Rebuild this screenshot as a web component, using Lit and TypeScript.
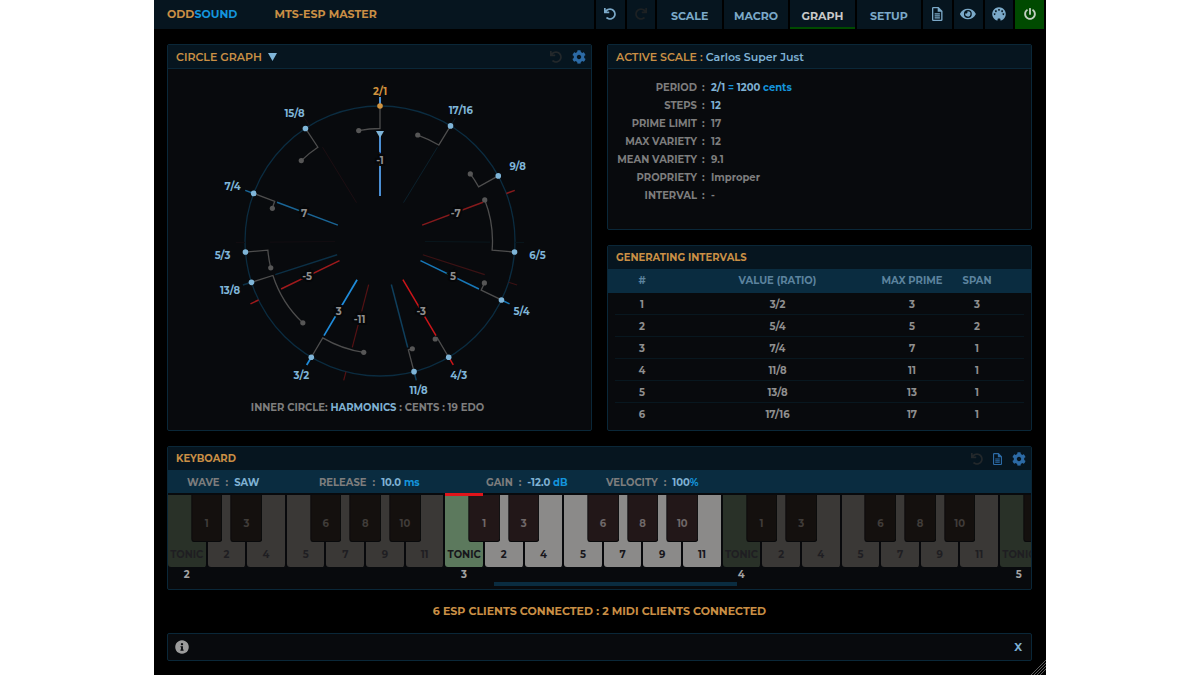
import { LitElement, html, css, svg, nothing } from "lit";
import { customElement, property, state } from "lit/decorators.js";
import { classMap } from "lit/directives/class-map.js";
import { styleMap } from "lit/directives/style-map.js";

const icons = {
  undo: {
    box: "0 0 512 512",
    d: "M212.333 224.333H12c-6.627 0-12-5.373-12-12V12C0 5.373 5.373 0 12 0h48c6.627 0 12 5.373 12 12v78.112C117.773 39.279 184.26 7.47 258.175 8.007c136.906.994 246.448 111.623 246.157 248.532C504.041 393.258 393.12 504 256.333 504c-64.089 0-122.496-24.313-166.51-64.215-5.099-4.622-5.334-12.554-.467-17.42l33.967-33.967c4.474-4.474 11.662-4.717 16.401-.525C170.76 415.336 211.58 432 256.333 432c97.268 0 176-78.716 176-176 0-97.267-78.716-176-176-176-58.496 0-110.28 28.476-142.274 72.333h98.274c6.627 0 12 5.373 12 12v48c0 6.627-5.373 12-12 12z",
  },
  cog: {
    box: "0 0 512 512",
    d: "M487.4 315.7l-42.6-24.6c4.3-23.2 4.3-47 0-70.2l42.6-24.6c4.9-2.8 7.1-8.6 5.5-14-11.1-35.6-30-67.8-54.7-94.6-3.8-4.1-10-5.1-14.8-2.3L380.8 110c-17.9-15.4-38.5-27.3-60.8-35.1V25.8c0-5.6-3.9-10.5-9.4-11.7-36.7-8.2-74.3-7.8-109.2 0-5.5 1.2-9.4 6.1-9.4 11.7V75c-22.2 7.9-42.8 19.8-60.8 35.1L88.7 85.5c-4.9-2.8-11-1.9-14.8 2.3-24.7 26.7-43.6 58.9-54.7 94.6-1.7 5.4.6 11.2 5.5 14L67.3 221c-4.3 23.2-4.3 47 0 70.2l-42.6 24.6c-4.9 2.8-7.1 8.6-5.5 14 11.1 35.6 30 67.8 54.7 94.6 3.8 4.1 10 5.1 14.8 2.3l42.6-24.6c17.9 15.4 38.5 27.3 60.8 35.1v49.2c0 5.6 3.9 10.5 9.4 11.7 36.7 8.2 74.3 7.8 109.2 0 5.5-1.2 9.4-6.1 9.4-11.7v-49.2c22.2-7.9 42.8-19.8 60.8-35.1l42.6 24.6c4.9 2.8 11 1.9 14.8-2.3 24.7-26.7 43.6-58.9 54.7-94.6 1.5-5.5-.7-11.3-5.6-14.1zM256 336c-44.1 0-80-35.9-80-80s35.9-80 80-80 80 35.9 80 80-35.9 80-80 80z",
  },
  eye: {
    box: "0 0 576 512",
    d: "M572.52 241.4C518.29 135.59 410.93 64 288 64S57.68 135.64 3.48 241.41a32.35 32.35 0 0 0 0 29.19C57.71 376.41 165.07 448 288 448s230.32-71.64 284.52-177.41a32.35 32.35 0 0 0 0-29.19zM288 400a144 144 0 1 1 144-144 143.93 143.93 0 0 1-144 144zm0-240a95.31 95.31 0 0 0-25.31 3.79 47.85 47.85 0 0 1-66.9 66.9A95.78 95.78 0 1 0 288 160z",
  },
  power: {
    box: "0 0 512 512",
    d: "M400 54.1c63 45 104 118.6 104 201.9 0 136.8-110.8 247.7-247.5 248C120 504.3 8.2 393 8 256.4 7.9 173.1 48.9 99.3 111.8 54.2c11.7-8.3 28-4.8 35 7.7L162.6 90c5.9 10.5 3.1 23.8-6.6 31-41.5 30.8-68 79.6-68 134.9-.1 92.3 74.5 168.1 168 168.1 91.6 0 168.6-74.2 168-169.1-.3-51.8-24.7-101.8-68.1-134-9.7-7.2-12.4-20.5-6.5-30.9l15.8-28.1c7-12.4 23.2-16.1 34.8-7.8zM296 264V24c0-13.3-10.7-24-24-24h-32c-13.3 0-24 10.7-24 24v240c0 13.3 10.7 24 24 24h32c13.3 0 24-10.7 24-24z",
  },
  doc: {
    box: "0 0 384 512",
    d: "M48 0H240L384 144V464Q384 512 336 512H48Q0 512 0 464V48Q0 0 48 0ZM48 48V464H336V176H208V48ZM96 232H288V276H96ZM96 304H288V348H96ZM96 376H288V416H96Z",
  },
  midi: {
    box: "0 0 512 512",
    d: "M205 498A248 248 0 1 1 307 498V440Q307 416 283 416H229Q205 416 205 440ZM96 228a32 32 0 1 0 .1 0ZM142 122a32 32 0 1 0 .1 0ZM256 74a32 32 0 1 0 .1 0ZM370 122a32 32 0 1 0 .1 0ZM416 228a32 32 0 1 0 .1 0Z",
  },
  info: {
    box: "0 0 512 512",
    d: "M256 8a248 248 0 1 0 .1 0ZM256 110a42 42 0 1 1-.1 0ZM200 224H290V350H314V392H198V350H222V266H200Z",
  },
};

@customElement("ui-icon")
class UiIcon extends LitElement {
  @property() name: keyof typeof icons = "undo";

  static styles = css`
    :host { display: flex; }
    svg { display: block; height: 12px; width: auto; overflow: visible; }
    :host([large]) svg { height: 14px; }
  `;

  render() {
    const { box, d } = icons[this.name];
    return html`<svg viewBox=${box} fill="currentColor" fill-rule="evenodd" aria-hidden="true"><path d=${d}></path></svg>`;
  }
}

const RIM = 135;
const BEND = 112.5;

const cents = (num: number, den: number) => 1200 * Math.log2(num / den);
const toAngle = (c: number) => (c / 1200) * 360;
const at = (angle: number, r: number) => {
  const a = (angle * Math.PI) / 180;
  return { x: r * Math.sin(a), y: -r * Math.cos(a) };
};

// ratio of every scale note, and the angle of the reference pitch it is tied to
const notes = [
  { num: 2, den: 1, ref: 349.1 },
  { num: 17, den: 16, ref: 19.6 },
  { num: 9, den: 8, ref: 53.4 },
  { num: 6, den: 5, ref: 68.6 },
  { num: 5, den: 4, ref: 111.9 },
  { num: 4, den: 3, ref: 150.6 },
  { num: 11, den: 8, ref: 163.3 },
  { num: 3, den: 2, ref: 188.3 },
  { num: 13, den: 8, ref: 223.3 },
  { num: 5, den: 3, ref: 256.2 },
  { num: 7, den: 4, ref: 286.9 },
  { num: 15, den: 8, ref: 315.6 },
];

const spokes = [
  { angle: 0, color: "#4b8fd4", label: "-1", width: 2 },
  { angle: 31.5, color: "#0b202b", label: "", width: 1 },
  { angle: 69.4, color: "#861a1c", label: "-7", width: 1.5 },
  { angle: 90.6, color: "#08161c", label: "", width: 1 },
  { angle: 107.8, color: "#3c1214", label: "", width: 1.2 },
  { angle: 115.9, color: "#1878b8", label: "5", width: 1.5 },
  { angle: 149.4, color: "#cc1519", label: "-3", width: 1.5 },
  { angle: 165.4, color: "#0f3f5c", label: "", width: 1.5 },
  { angle: 194.6, color: "#551214", label: "-11", width: 1.2 },
  { angle: 210.6, color: "#1f8cdb", label: "3", width: 1.7 },
  { angle: 244.1, color: "#a01a1c", label: "-5", width: 1.5 },
  { angle: 252.2, color: "#0c3046", label: "", width: 1.5 },
  { angle: 269.4, color: "#120d11", label: "", width: 1 },
  { angle: 290.6, color: "#1a6595", label: "7", width: 1.5 },
  { angle: 328.5, color: "#1c0e12", label: "", width: 1 },
];

@customElement("circle-graph")
class CircleGraph extends LitElement {
  static styles = css`
    :host { display: block; }
    svg { display: block; width: 100%; height: auto; font-family: Montserrat, Inter, sans-serif; font-weight: 700; }
    .rim { fill: none; stroke: #0b2c40; stroke-width: 1.3; }
    .tie { fill: none; stroke: #4d4d4d; stroke-width: 1.3; }
    .ref { fill: #565656; }
    .note { fill: #7fb5d8; }
    .ratio { fill: #7fb5d8; font-size: 10px; text-anchor: middle; }
    .root { fill: #d0923e; }
    .harmonic { fill: #8f8f8f; stroke: #050608; stroke-width: 4; paint-order: stroke; font-size: 10px; text-anchor: middle; }
  `;

  private spoke(s: (typeof spokes)[number]) {
    const a = at(s.angle, 45);
    const b = at(s.angle, 110);
    const c = at(s.angle, RIM);
    const d = at(s.angle, 144);
    const t = at(s.angle, 81);
    return svg`
      <line x1=${a.x} y1=${a.y} x2=${b.x} y2=${b.y} stroke=${s.color} stroke-width=${s.width}></line>
      <line x1=${c.x} y1=${c.y} x2=${d.x} y2=${d.y} stroke=${s.color} stroke-width=${s.width}></line>
      ${s.label ? svg`<text class="harmonic" x=${t.x} y=${t.y + 4}>${s.label}</text>` : nothing}`;
  }

  private note(n: (typeof notes)[number]) {
    const root = n.num === 2;
    const angle = root ? 360 : toAngle(cents(n.num, n.den));
    const outer = at(angle, RIM);
    const bend = at(angle, BEND);
    const ref = at(n.ref, BEND);
    const label = at(angle, 151 + 7 * Math.abs(Math.sin((angle * Math.PI) / 180)));
    const sweep = n.ref > angle ? 1 : 0;
    return svg`
      <path class="tie" d="M${outer.x} ${outer.y}L${bend.x} ${bend.y}A${BEND} ${BEND} 0 0 ${sweep} ${ref.x} ${ref.y}"></path>
      <circle class="ref" cx=${ref.x} cy=${ref.y} r="2.6"></circle>
      <circle class=${root ? "root" : "note"} cx=${outer.x} cy=${outer.y} r="2.8"></circle>
      <text class=${root ? "ratio root" : "ratio"} x=${label.x} y=${label.y + 5}>${n.num}/${n.den}</text>`;
  }

  render() {
    return html`<svg viewBox="-212 -172 423 329" role="img" aria-label="Circle graph of scale notes">
      <circle class="rim" r=${RIM}></circle>
      ${spokes.map((s) => this.spoke(s))}
      ${notes.map((n) => this.note(n))}
      <path class="note" d="M-4 -110H4L0 -103Z"></path>
    </svg>`;
  }
}

const whiteKeys = ["TONIC", "2", "4", "5", "7", "9", "11"];
const blackKeys = [
  { label: "1", after: 1 },
  { label: "3", after: 2 },
  { label: "6", after: 4 },
  { label: "8", after: 5 },
  { label: "10", after: 6 },
];

@customElement("key-octave")
class KeyOctave extends LitElement {
  @property({ type: Number }) number = 0;
  @property({ type: Boolean, reflect: true }) active = false;
  // an octave that has only begun shows its tonic and the edge of the next key
  @property({ type: Boolean }) partial = false;

  static styles = css`
    :host { display: block; flex: 0 0 32.14%; color: #1f1e22; --white: #3a3836; --tonic: #293128; --black: #14100e; --black-text: #403c39; }
    :host([active]) { color: #17161b; --white: #8b8a89; --tonic: #5c795d; --black: #221718; --black-text: #6f6868; }
    button { font: inherit; margin: 0; padding: 0; cursor: pointer; }
    .keys { position: relative; display: grid; grid-template-columns: repeat(7, 1fr); height: 72px; }
    .white { display: flex; align-items: flex-end; justify-content: center; border: 0 solid #08090c; border-right-width: 2px; border-radius: 0 0 3px 3px; background: var(--white); color: inherit; line-height: 15px; padding-bottom: 5px; white-space: nowrap; }
    .tonic { background: var(--tonic); }
    .black { position: absolute; top: 0; width: 11.4%; height: 47px; transform: translateX(-50%); border: 1px solid #08090b; border-top: 0; border-radius: 0 0 3px 3px; background: var(--black); color: var(--black-text); padding-top: 12px; }
    .held { position: absolute; top: -2px; left: 0; width: 13.6%; height: 3px; background: #e0141a; }
    .number { display: block; width: 13.4%; text-align: center; line-height: 15px; color: #a3a3a3; }
  `;

  render() {
    const whites = this.partial ? whiteKeys.slice(0, 1) : whiteKeys;
    const blacks = this.partial ? [{ label: "", after: 1 }] : blackKeys;
    return html`
      <div class="keys">
        ${whites.map((k) => html`<button class=${classMap({ white: true, tonic: k === "TONIC" })}>${k}</button>`)}
        ${blacks.map((k) => html`<button class="black" style=${styleMap({ left: `${(k.after / 7) * 100 - 0.3}%` })}>${k.label}</button>`)}
        ${this.active ? html`<span class="held"></span>` : nothing}
      </div>
      <span class="number">${this.number}</span>`;
  }
}

@customElement("app-root")
class AppRoot extends LitElement {
  @state() private tab = "GRAPH";

  private facts = [
    ["STEPS", "12", true],
    ["PRIME LIMIT", "17", false],
    ["MAX VARIETY", "12", false],
    ["MEAN VARIETY", "9.1", false],
    ["PROPRIETY", "Improper", false],
    ["INTERVAL", "-", false],
  ] as const;

  private intervals = [
    ["3/2", 3, 3],
    ["5/4", 5, 2],
    ["7/4", 7, 1],
    ["11/8", 11, 1],
    ["13/8", 13, 1],
    ["17/16", 17, 1],
  ] as const;

  static styles = css`
    :host { display: block; background: #fff; color: #7d7d7d; font: 700 10px/18px Montserrat, Inter, sans-serif; }
    * { box-sizing: border-box; }
    button, select { font: inherit; color: inherit; background: none; border: 0; margin: 0; padding: 0; cursor: pointer; }
    h1, h2, dl, dd, p { margin: 0; font: inherit; }
    .app { position: relative; max-width: 892px; min-height: 100vh; margin: 0 auto; background: #000; }
    .top { display: flex; height: 29px; font-size: 11px; }
    .brand { flex: 1; display: flex; align-items: center; gap: 37px; padding: 0 0 1px 13px; background: #06151f; color: #c98f45; }
    .accent { color: #1494dc; }
    .value { color: #7fb1d3; }
    .nav { display: grid; grid-template-columns: 29fr 29fr repeat(4, 65fr) repeat(4, 29fr); gap: 2px; width: 452px; padding: 0 2px 0 2px; }
    .nav button { display: flex; align-items: center; justify-content: center; background: #06151f; color: #7ba9c8; border-bottom: 2px solid #06151f; padding-top: 4px; }
    .nav .tool { padding-top: 1px; }
    .nav .off { color: #1d2123; }
    .nav .current { color: #c9c9c9; border-bottom-color: #004a00; }
    .nav .power { background: #004a00; border-color: #004a00; color: #c0cfc0; }
    .flip { transform: scaleX(-1); }
    .main { display: flex; flex-direction: column; gap: 15px; padding: 15px 14px 0 13px; }
    .columns { display: grid; grid-template-columns: 1fr 1fr; gap: 15px; }
    .side { display: grid; grid-template-rows: 1fr 1fr; gap: 15px; }
    .panel { border: 1px solid #0a2738; border-radius: 2px; background: #080a0d; overflow: hidden; }
    .head { display: flex; align-items: center; justify-content: space-between; height: 23px; padding: 0 5px 0 8px; background: #06151f; color: #c98f45; }
    .ruled { height: 24px; border-bottom: 1px solid #0a2738; font-size: 11px; font-weight: 600; }
    .picker { display: flex; align-items: center; gap: 6px; }
    .picker select { appearance: none; text-transform: inherit; }
    .picker svg { width: 9px; height: 8px; fill: #7fb5d8; }
    .tools { display: flex; align-items: center; gap: 10px; color: #2c6aa5; }
    .tools button { display: flex; }
    .tools .off { color: #23282b; }
    .caption { text-align: center; padding: 1px 24px 13px 0; }
    .facts { display: grid; grid-template-columns: 89px 1fr; padding: 10px 0 23px; }
    .facts dt { text-align: right; white-space: nowrap; }
    .facts dd { display: flex; }
    .facts dd::before { content: ":"; width: 9px; padding-left: 5px; }
    table { width: 100%; border-collapse: collapse; table-layout: fixed; text-align: center; line-height: 14px; color: #8f8f8f; }
    th, td { padding: 2px 0 0; height: 22px; font-weight: inherit; white-space: nowrap; }
    th { padding: 0; height: 24px; background: #0a2c40; color: #5c839e; }
    .n { width: 68px; }
    .prime { width: 66px; }
    .span { width: 86px; }
    th:last-child, td:last-child { padding-right: 22px; }
    tbody tr:not(:last-child) { background: linear-gradient(#08171f, #08171f) center bottom / calc(100% - 14px) 1px no-repeat; }
    .params { display: grid; grid-template-columns: 132px 167px 120px 1fr; padding-left: 19px; height: 23px; line-height: 24px; background: #0a2c40; }
    .params button { display: flex; white-space: pre; padding-top: 1px; line-height: inherit; }
    .colon { margin: 0 6px; }
    .keyboard { display: flex; overflow: hidden; padding-top: 2px; }
    .thumb { width: 28.1%; height: 4px; margin: 0 0 3px 37.8%; background: #0a2c40; }
    .status { font-size: 11px; text-align: center; line-height: 18px; padding: 12px 0 13px; margin: -15px 0; color: #c98f45; }
    .info { display: flex; align-items: center; justify-content: space-between; height: 28px; padding: 0 9px 0 7px; color: #9b9b9b; }
    .info button { font-size: 11px; }
    .grip { position: absolute; right: 0; bottom: 0; width: 15px; height: 15px; stroke: #5a5a5a; }
  `;

  private param(name: string, value: string, unit = "") {
    return html`<button><span>${name}</span><span class="colon">:</span><span class="value">${value}</span><span class="accent">${unit}</span></button>`;
  }

  render() {
    return html`
      <div class="app">
        <header class="top">
          <div class="brand">
            <span>ODD<span class="accent">SOUND</span></span>
            <h1>MTS-ESP MASTER</h1>
          </div>
          <nav class="nav">
            <button class="tool" aria-label="Undo"><ui-icon name="undo"></ui-icon></button>
            <button class="tool off" aria-label="Redo"><ui-icon class="flip" name="undo"></ui-icon></button>
            ${["SCALE", "MACRO", "GRAPH", "SETUP"].map(
              (t) => html`<button class=${classMap({ current: t === this.tab })} @click=${() => (this.tab = t)}>${t}</button>`
            )}
            <button class="tool" aria-label="Notes"><ui-icon large name="doc"></ui-icon></button>
            <button class="tool" aria-label="View"><ui-icon large name="eye"></ui-icon></button>
            <button class="tool" aria-label="MIDI"><ui-icon large name="midi"></ui-icon></button>
            <button class="tool power" aria-label="Power"><ui-icon name="power"></ui-icon></button>
          </nav>
        </header>

        <main class="main">
          <div class="columns">
            <section class="panel">
              <div class="head ruled">
                <label class="picker">
                  <select aria-label="Graph type"><option>CIRCLE GRAPH</option></select>
                  <svg viewBox="0 0 9 8" aria-hidden="true"><path d="M0 0H9L4.5 8Z"></path></svg>
                </label>
                <div class="tools">
                  <button class="off" aria-label="Reset graph"><ui-icon name="undo"></ui-icon></button>
                  <button aria-label="Graph settings"><ui-icon large name="cog"></ui-icon></button>
                </div>
              </div>
              <circle-graph></circle-graph>
              <p class="caption">INNER CIRCLE: <button class="value">HARMONICS</button> : <button>CENTS</button> : <button>19 EDO</button></p>
            </section>

            <div class="side">
              <section class="panel">
                <div class="head ruled"><h2>ACTIVE SCALE : <span class="value">Carlos Super Just</span></h2></div>
                <dl class="facts">
                  <dt>PERIOD</dt>
                  <dd><span class="value">2/1 <span class="accent">=</span> 1200 <span class="accent">cents</span></span></dd>
                  ${this.facts.map(([k, v, lit]) => html`<dt>${k}</dt><dd><span class=${lit ? "value" : ""}>${v}</span></dd>`)}
                </dl>
              </section>

              <section class="panel">
                <div class="head"><h2>GENERATING INTERVALS</h2></div>
                <table>
                  <thead>
                    <tr><th class="n">#</th><th>VALUE (RATIO)</th><th class="prime">MAX PRIME</th><th class="span">SPAN</th></tr>
                  </thead>
                  <tbody>
                    ${this.intervals.map(([r, p, s], i) => html`<tr><td>${i + 1}</td><td>${r}</td><td>${p}</td><td>${s}</td></tr>`)}
                  </tbody>
                </table>
              </section>
            </div>
          </div>

          <section class="panel">
            <div class="head">
              <h2>KEYBOARD</h2>
              <div class="tools">
                <button class="off" aria-label="Reset keyboard"><ui-icon name="undo"></ui-icon></button>
                <button aria-label="Keyboard notes"><ui-icon name="doc"></ui-icon></button>
                <button aria-label="Keyboard settings"><ui-icon large name="cog"></ui-icon></button>
              </div>
            </div>
            <div class="params">
              ${this.param("WAVE", "SAW")} ${this.param("RELEASE", "10.0 ", "ms")}
              ${this.param("GAIN", "-12.0 ", "dB")} ${this.param("VELOCITY", "100", "%")}
            </div>
            <div class="keyboard">
              ${[2, 3, 4, 5].map((n) => html`<key-octave .number=${n} ?active=${n === 3} ?partial=${n === 5}></key-octave>`)}
            </div>
            <div class="thumb"></div>
          </section>

          <p class="status">6 ESP CLIENTS CONNECTED : 2 MIDI CLIENTS CONNECTED</p>

          <footer class="panel info">
            <ui-icon large name="info"></ui-icon>
            <button class="value" aria-label="Close">X</button>
          </footer>
        </main>
        <svg class="grip" viewBox="0 0 15 15" aria-hidden="true"><path d="M0 15L15 0M3 15L15 3M6 15L15 6M9 15L15 9"></path></svg>
      </div>`;
  }
}
